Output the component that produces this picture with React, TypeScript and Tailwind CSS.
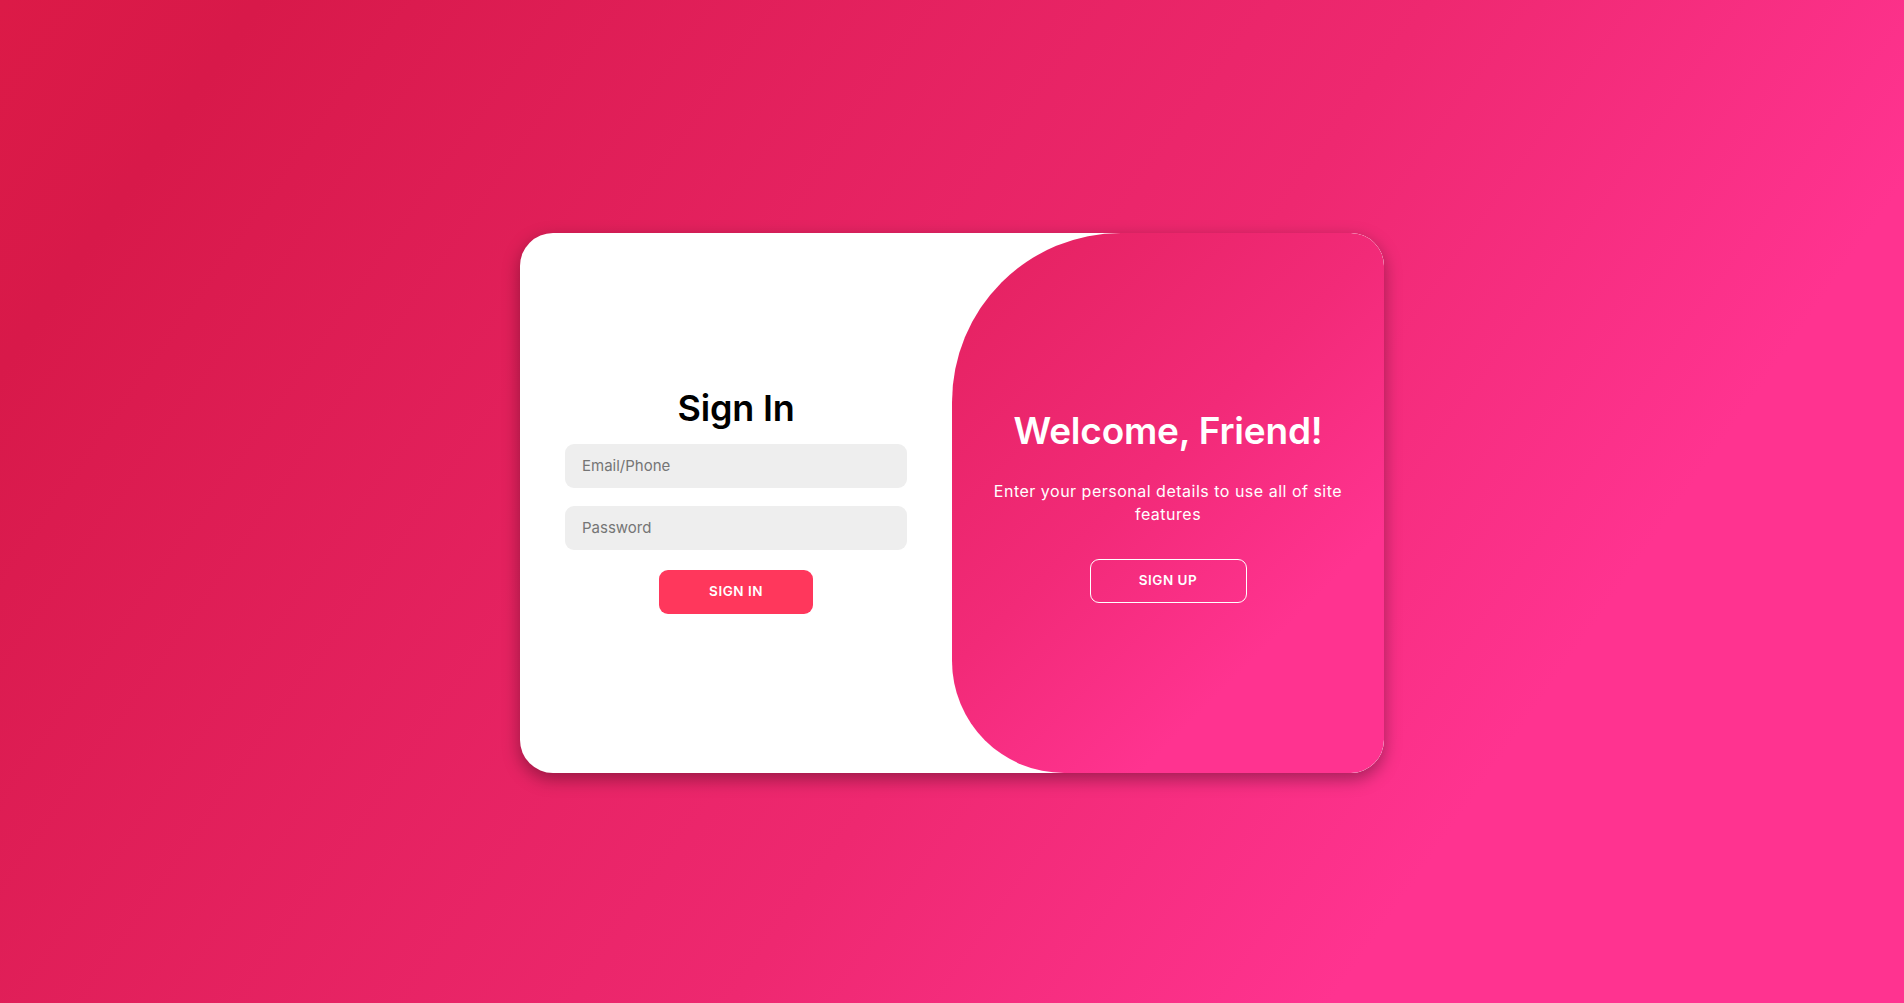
import { useState } from 'react';

const font = { fontFamily: 'Inter, "Open Sans", sans-serif' };

const App = () => {
  const [email, setEmail] = useState('');
  const [password, setPassword] = useState('');

  return (
    <div
      className="w-full h-screen pt-[3px] flex items-center justify-center bg-[linear-gradient(125deg,#dc1a47_0%,#d8194a_10%,#ee2870_55%,#ff3390_78%,#ff3390_100%)]"
      style={font}
    >
      <div className="relative w-[864px] h-[540px] bg-white rounded-[33px] shadow-[0_6px_17px_rgba(0,0,0,0.35)] overflow-hidden flex">
        {/* sign in form */}
        <form
          className="w-1/2 h-full flex flex-col items-center justify-center px-[45px] pb-[12px]"
          onSubmit={(e) => e.preventDefault()}
        >
          <h1 className="text-[36px] leading-[54px] font-semibold text-black tracking-[-0.2px]">Sign In</h1>
          <input
            type="email"
            placeholder="Email/Phone"
            value={email}
            onChange={(e) => setEmail(e.target.value)}
            className="w-full h-[44px] my-[9px] px-[17px] rounded-[9px] bg-[#eeeeee] text-[15px] text-gray-800 placeholder:text-[#757575] outline-none"
          />
          <input
            type="password"
            placeholder="Password"
            value={password}
            onChange={(e) => setPassword(e.target.value)}
            className="w-full h-[44px] my-[9px] px-[17px] rounded-[9px] bg-[#eeeeee] text-[15px] text-gray-800 placeholder:text-[#757575] outline-none"
          />
          <button
            type="submit"
            className="mt-[11px] w-[154px] h-[44px] rounded-[9px] bg-[#ff375c] text-white text-[13.5px] font-semibold tracking-[0.5px] uppercase"
          >
            Sign In
          </button>
        </form>

        {/* welcome panel */}
        <div className="w-1/2 h-full rounded-[169px_33px_33px_112px] bg-[linear-gradient(135deg,#e3215e_0%,#f22a78_45%,#ff3390_75%,#ff3390_100%)] flex flex-col items-center justify-center px-[34px] text-center text-white">
          <h1 className="text-[37px] leading-[54px] font-semibold tracking-[-0.2px]">Welcome, Friend!</h1>
          <p className="my-[22.5px] text-[16px] leading-[22.5px] tracking-[0.5px]">
            Enter your personal details to use all of site features
          </p>
          <button
            type="button"
            className="mt-[11px] w-[157px] h-[44px] rounded-[9px] border border-white bg-transparent text-white text-[13.5px] font-semibold tracking-[0.5px] uppercase"
          >
            Sign Up
          </button>
        </div>
      </div>
    </div>
  );
};

export default App;
